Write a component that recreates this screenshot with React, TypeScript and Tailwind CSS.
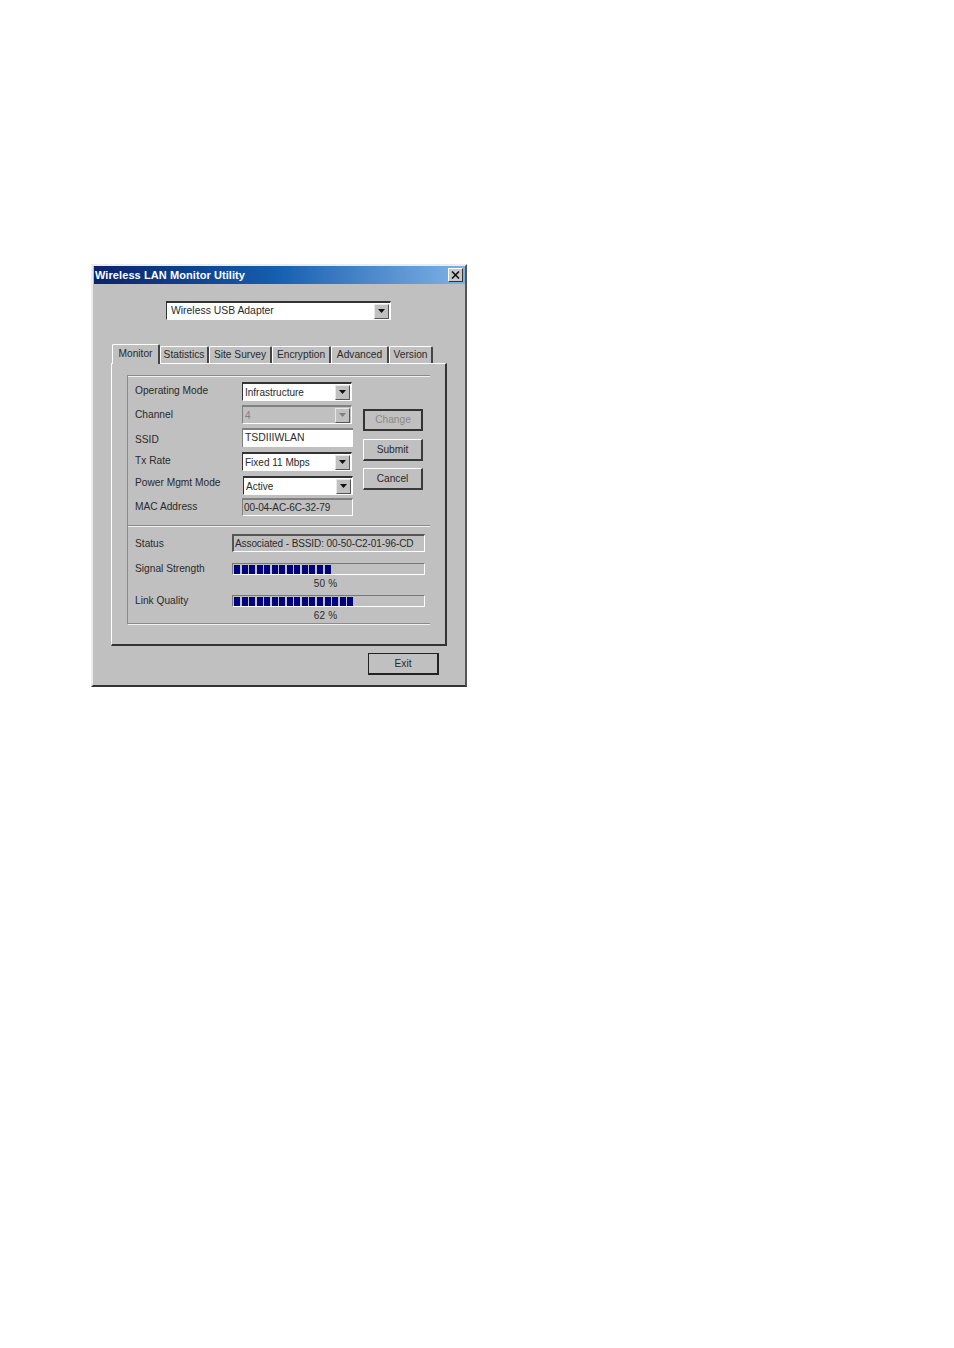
const raisedBtn = "border-t border-l border-t-white border-l-white border-b-2 border-r-2 border-b-[#3a3a3a] border-r-[#3a3a3a]";

function DropArrow({ disabled }: { disabled?: boolean }) {
  return (
    <span className="flex h-[15px] w-[15px] shrink-0 items-center justify-center bg-[#c0c0c0] border-t border-l border-t-[#e8e8e8] border-l-[#e8e8e8] border-b border-r border-b-[#555] border-r-[#555]">
      <svg width="7" height="4" viewBox="0 0 7 4">
        <path d="M0 0h7L3.5 4z" fill={disabled ? "#808080" : "#111"} />
      </svg>
    </span>
  );
}

function Combo({ text, disabled, className }: { text: string; disabled?: boolean; className: string }) {
  return (
    <div className={`flex items-center justify-between pr-[1px] pl-[2px] border-t-2 border-l border-b border-r border-b-white border-r-white ${disabled ? "bg-[#c0c0c0] text-[#808080] border-t-[#808080] border-l-[#808080]" : "bg-white text-[#2a2a2a] border-t-[#333] border-l-[#333]"} ${className}`}>
      <span className="truncate pt-[1px]">{text}</span>
      <DropArrow disabled={disabled} />
    </div>
  );
}

function Tab({ label, width, active }: { label: string; width: string; active?: boolean }) {
  return (
    <div className={`flex items-center justify-center rounded-t-[2px] border-t border-l border-t-white border-l-white border-r-2 border-r-[#444] ${width} ${active ? "relative z-10 h-[20px] -mb-[1px] bg-[#c0c0c0] pb-[1px]" : "h-[17px] pt-[1px]"}`}>
      {label}
    </div>
  );
}

function PushButton({ label, className }: { label: string; className: string }) {
  return <div className={`flex items-center justify-center bg-[#c0c0c0] pt-[1px] ${className}`}>{label}</div>;
}

function Meter({ count, percent }: { count: number; percent: string }) {
  return (
    <div className="w-[193px]">
      <div className="flex h-[12px] items-center gap-[1.55px] border-t border-l border-t-[#777] border-l-[#777] border-b border-r border-b-white border-r-white pl-[1px]">
        {Array.from({ length: count }).map((_, i) => (
          <span key={i} className="h-[9px] w-[6px] bg-[#000080]" />
        ))}
      </div>
      <div className="mt-[2px] h-[14px] pr-[6px] text-center text-[10px] leading-[14px] tracking-[0.2px]">{percent}</div>
    </div>
  );
}

const labels = [
  { text: "Operating Mode", h: "h-[24px]" },
  { text: "Channel", h: "h-[25px]" },
  { text: "SSID", h: "h-[21px]" },
  { text: "Tx Rate", h: "h-[22px]" },
  { text: "Power Mgmt Mode", h: "h-[24px]" },
  { text: "MAC Address", h: "h-[20px]" },
];

export default function App() {
  return (
    <div className="min-h-[1348px] bg-white pl-[91px] pt-[264px] font-['Liberation_Sans',Arial,sans-serif] text-[10.2px] leading-none text-[#2a2a2a]">
      <div className="flex h-[423px] w-[376px] flex-col border-t-2 border-l-2 border-t-[#ececec] border-l-[#ececec] border-b-2 border-r-2 border-b-[#333] border-r-[#555] bg-[#c0c0c0] pl-[1px]">
        {/* title bar */}
        <div className="flex h-[18px] w-[371px] shrink-0 items-center justify-between bg-gradient-to-r from-[#0a246a] via-[#1560b0] to-[#7fb2e5] pl-[1px] pr-[2px]">
          <span className="text-[11px] font-bold tracking-[0.08px] text-white">Wireless LAN Monitor Utility</span>
          <span className="flex h-[14px] w-[15px] items-center justify-center border-t border-l border-t-white border-l-white border-b border-r border-b-[#333] border-r-[#333] bg-[#c8c8c8]">
            <svg width="9" height="8" viewBox="0 0 9 8">
              <path d="M1 0.5L8 7.5M8 0.5L1 7.5" stroke="#111" strokeWidth="1.6" />
            </svg>
          </span>
        </div>

        {/* adapter */}
        <Combo text="Wireless USB Adapter" className="ml-[72px] mt-[17px] h-[19px] w-[225px] pl-[4px] text-[10.4px]" />

        {/* tabs */}
        <div className="ml-[18px] mt-[24px] flex h-[19px] items-end">
          <Tab label="Monitor" width="w-[48px]" active />
          <Tab label="Statistics" width="w-[49px]" />
          <Tab label="Site Survey" width="w-[63px]" />
          <Tab label="Encryption" width="w-[59px]" />
          <Tab label="Advanced" width="w-[58px]" />
          <Tab label="Version" width="w-[44px]" />
        </div>

        {/* tab body */}
        <div className="ml-[17px] h-[283px] w-[336px] border-t border-l border-t-white border-l-white border-b-2 border-r-2 border-b-[#333] border-r-[#333] pl-[15px] pt-[11px]">
          <div className="w-[303px] border-t border-l border-t-[#8a8a8a] border-l-[#8a8a8a] shadow-[inset_0_1px_0_#f0f0f0]">
            <div className="flex h-[150px] border-b border-b-[#8a8a8a] pl-[7px] pt-[6px] shadow-[0_1px_0_#f0f0f0]">
              <div className="w-[107px]">
                {labels.map((l) => (
                  <div key={l.text} className={`${l.h} pt-[2px] whitespace-nowrap leading-[14px]`}>{l.text}</div>
                ))}
              </div>
              <div className="w-[111px] text-[10px]">
                <Combo text="Infrastructure" className="h-[19px] w-[110px]" />
                <Combo text="4" disabled className="mt-[4px] h-[19px] w-[110px]" />
                <div className="mt-[4px] flex h-[19px] w-[111px] items-center border-t-2 border-l border-t-[#808080] border-l-[#808080] bg-white pl-[2px] text-[10.4px]">TSDIIIWLAN</div>
                <Combo text="Fixed 11 Mbps" className="mt-[5px] h-[19px] w-[110px]" />
                <Combo text="Active" className="mt-[5px] ml-[1px] h-[19px] w-[110px]" />
                <div className="mt-[3px] flex h-[18px] w-[111px] items-center border-t-2 border-l border-t-[#808080] border-l-[#808080] border-b border-r border-b-white border-r-white pl-[1px] tracking-[-0.1px]">00-04-AC-6C-32-79</div>
              </div>
              <div className="ml-[10px] mt-[27px] w-[60px]">
                <PushButton label="Change" className="h-[22px] border-2 border-[#333] text-[#8a8a8a]" />
                <PushButton label="Submit" className={`mt-[8px] h-[22px] ${raisedBtn}`} />
                <PushButton label="Cancel" className={`mt-[7px] h-[22px] ${raisedBtn}`} />
              </div>
            </div>
            <div className="h-[98px] border-b border-b-[#8a8a8a] pl-[7px] pt-[8px] shadow-[0_1px_0_#f0f0f0]">
              <div className="flex">
                <div className="w-[97px] pt-[3px] leading-[14px]">Status</div>
                <div className="flex h-[18px] w-[193px] items-center border-t-2 border-l-2 border-t-[#555] border-l-[#555] border-b border-r border-b-white border-r-white pl-[1px] pt-[1px] text-[10px] tracking-[-0.09px] whitespace-nowrap">Associated - BSSID: 00-50-C2-01-96-CD</div>
              </div>
              <div className="mt-[11px] flex">
                <div className="w-[97px] leading-[12px]">Signal Strength</div>
                <Meter count={13} percent="50 %" />
              </div>
              <div className="mt-[4px] flex">
                <div className="w-[97px] leading-[12px]">Link Quality</div>
                <Meter count={16} percent="62 %" />
              </div>
            </div>
          </div>
        </div>

        <PushButton label="Exit" className="ml-[274px] mt-[7px] h-[22px] w-[71px] border-t border-l border-t-[#222] border-l-[#222] border-b-2 border-r-2 border-b-[#222] border-r-[#222]" />
      </div>
    </div>
  );
}
